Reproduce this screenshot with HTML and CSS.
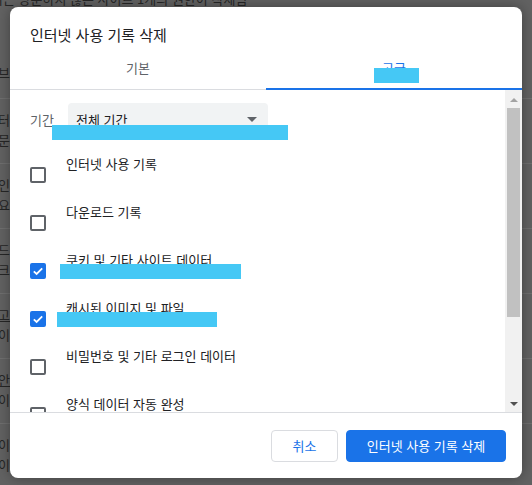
FILE: index.html
```html
<!DOCTYPE html>
<html lang="ko">
<head>
<meta charset="utf-8">
<title>인터넷 사용 기록 삭제</title>
<link rel="stylesheet" href="styles.css">
</head>
<body>
<div class="page">
  <div class="notice">최근 방문하지 않은 사이트 1개의 권한이 삭제됨</div>
  <div class="bg-row first"><div>브라우저 설정</div></div>
  <div class="bg-row"><div>터넷 사용 기록</div><div>문 기록 및 쿠키</div></div>
  <div class="bg-row"><div>인터넷 사용 기록 삭제</div><div>요약</div></div>
  <div class="bg-row"><div>드</div><div>크롬</div></div>
  <div class="bg-row"><div class="u">고급 설정</div><div>이.</div></div>
  <div class="bg-row"><div class="u">안전</div><div>이.</div></div>
  <div class="bg-row"><div>이.</div><div>이.</div></div>
</div>

<div class="dialog">
  <h1 class="title">인터넷 사용 기록 삭제</h1>
  <div class="tabs">
    <div class="tab">기본</div>
    <div class="tab active">고급</div>
  </div>
  <div class="body">
    <div class="list">
      <div class="period">
        <span class="period-label">기간</span>
        <div class="select"><span>전체 기간</span><span class="caret"></span></div>
      </div>
      <div class="item"><span class="cb"></span><div class="item-text"><div class="item-label">인터넷 사용 기록</div><div class="item-sub"></div></div></div>
      <div class="item"><span class="cb"></span><div class="item-text"><div class="item-label">다운로드 기록</div><div class="item-sub"></div></div></div>
      <div class="item"><span class="cb checked"><svg viewBox="0 0 16 16" width="16" height="16"><polyline points="3.8,8.3 6.6,11 12.2,5.4" fill="none" stroke="#fff" stroke-width="1.8"/></svg></span><div class="item-text"><div class="item-label">쿠키 및 기타 사이트 데이터</div><div class="item-sub"></div></div></div>
      <div class="item"><span class="cb checked"><svg viewBox="0 0 16 16" width="16" height="16"><polyline points="3.8,8.3 6.6,11 12.2,5.4" fill="none" stroke="#fff" stroke-width="1.8"/></svg></span><div class="item-text"><div class="item-label">캐시된 이미지 및 파일</div><div class="item-sub"></div></div></div>
      <div class="item"><span class="cb"></span><div class="item-text"><div class="item-label">비밀번호 및 기타 로그인 데이터</div><div class="item-sub"></div></div></div>
      <div class="item"><span class="cb"></span><div class="item-text"><div class="item-label">양식 데이터 자동 완성</div><div class="item-sub"></div></div></div>
    </div>
    <div class="scrollbar">
      <div class="sb-btn"><span class="arrow-up"></span></div>
      <div class="sb-track"><div class="sb-thumb"></div></div>
      <div class="sb-btn"><span class="arrow-down"></span></div>
    </div>
  </div>
  <div class="footer">
    <button class="btn cancel">취소</button>
    <button class="btn primary">인터넷 사용 기록 삭제</button>
  </div>
</div>

<div class="mark mark-tab"></div>
<div class="mark mark-period"></div>
<div class="mark mark-cookies"></div>
<div class="mark mark-cache"></div>
</body>
</html>
```

FILE: styles.css
```css
* { box-sizing: border-box; }

html, body {
  margin: 0;
  height: 485px;
  overflow: hidden;
}

body {
  position: relative;
  background: #626262;
  font-family: "Noto Sans CJK KR", "Noto Sans", sans-serif;
  color: #202124;
}

/* dimmed page behind the modal */
.page {
  color: #262626;
  font-size: 13px;
}

.notice {
  margin-top: -11px;
  margin-left: -9px;
  height: 20px;
  line-height: 20px;
  white-space: nowrap;
}

.bg-row {
  border-top: 1px solid #6f6f6f;
  padding: 11px 0 13px;
  line-height: 20px;
  white-space: nowrap;
  margin-left: -2px;
}

.bg-row.first {
  border-top: none;
  padding: 54px 0 15px;
}

.bg-row .u { text-decoration: underline; }

/* dialog */
.dialog {
  position: absolute;
  left: 10px;
  top: 7px;
  width: 512px;
  height: 471px;
  background: #fff;
  border-radius: 8px;
  box-shadow: 0 0 14px rgba(0, 0, 0, 0.35);
  display: flex;
  flex-direction: column;
  overflow: hidden;
}

.title {
  margin: 0;
  padding: 17px 20px 0;
  font-size: 15px;
  font-weight: normal;
  line-height: 22px;
  color: #202124;
}

.tabs {
  display: flex;
}

.tab {
  flex: 1;
  text-align: center;
  font-size: 13px;
  line-height: 20px;
  padding: 12px 0 11px;
  color: #5f6368;
  border-bottom: 1px solid #dadce0;
}

.tab.active {
  color: #1a73e8;
  padding-bottom: 10px;
  border-bottom: 2px solid #1a73e8;
}

.body {
  height: 322px;
  display: flex;
}

.list {
  flex: 1;
  overflow: hidden;
  padding: 13px 0 0 20px;
}

.period {
  display: flex;
  align-items: center;
  height: 32px;
  margin-bottom: 19px;
  font-size: 13px;
}

.period-label {
  width: 38px;
  color: #5f6368;
}

.select {
  width: 200px;
  height: 32px;
  border-radius: 4px;
  background: #f1f3f4;
  display: flex;
  align-items: center;
  justify-content: space-between;
  padding: 0 11px 0 8px;
  color: #202124;
}

.caret {
  width: 0;
  height: 0;
  border-left: 5px solid transparent;
  border-right: 5px solid transparent;
  border-top: 5px solid #5f6368;
}

.item {
  display: flex;
  align-items: center;
  height: 40px;
  margin-bottom: 8px;
  gap: 20px;
}

.cb {
  flex: none;
  width: 16px;
  height: 16px;
  border: 2px solid #5f6368;
  border-radius: 2px;
  margin-top: 2px;
  position: relative;
}

.cb.checked {
  background: #1a73e8;
  border-color: #1a73e8;
}

.cb svg {
  position: absolute;
  left: -2px;
  top: -2px;
}

.item-text {
  font-size: 13px;
  line-height: 20px;
  color: #202124;
}

.item-sub { height: 20px; }

/* classic scrollbar */
.scrollbar {
  width: 17px;
  flex: none;
  background: #f1f1f1;
  display: flex;
  flex-direction: column;
}

.sb-btn {
  height: 17px;
  display: flex;
  align-items: center;
  justify-content: center;
}

.arrow-up {
  width: 0;
  height: 0;
  border-left: 4px solid transparent;
  border-right: 4px solid transparent;
  border-bottom: 4px solid #a3a3a3;
  margin-top: 3px;
}

.arrow-down {
  width: 0;
  height: 0;
  border-left: 4px solid transparent;
  border-right: 4px solid transparent;
  border-top: 4px solid #505050;
}

.sb-track {
  flex: 1;
  padding: 1px 2px 0;
}

.sb-thumb {
  height: 209px;
  background: #c1c1c1;
}

.footer {
  flex: 1;
  border-top: 1px solid #dadce0;
  display: flex;
  justify-content: flex-end;
  align-items: flex-start;
  gap: 8px;
  padding: 17px 16px 0 0;
}

.btn {
  height: 32px;
  border-radius: 4px;
  font-family: inherit;
  font-size: 13px;
  line-height: 20px;
  cursor: pointer;
}

.btn.cancel {
  width: 67px;
  padding: 0;
  background: #fff;
  border: 1px solid #dadce0;
  color: #1a73e8;
}

.btn.primary {
  width: 160px;
  padding: 0;
  background: #1a73e8;
  border: 1px solid #1a73e8;
  color: #fff;
}

/* annotation highlights drawn over the screenshot */
.mark {
  position: absolute;
  background: #45c8f5;
  height: 15px;
}

.mark-tab { left: 374px; top: 68px; width: 45px; }
.mark-period { left: 52px; top: 125px; width: 236px; }
.mark-cookies { left: 60px; top: 264px; width: 181px; }
.mark-cache { left: 57px; top: 312px; width: 160px; }
```
